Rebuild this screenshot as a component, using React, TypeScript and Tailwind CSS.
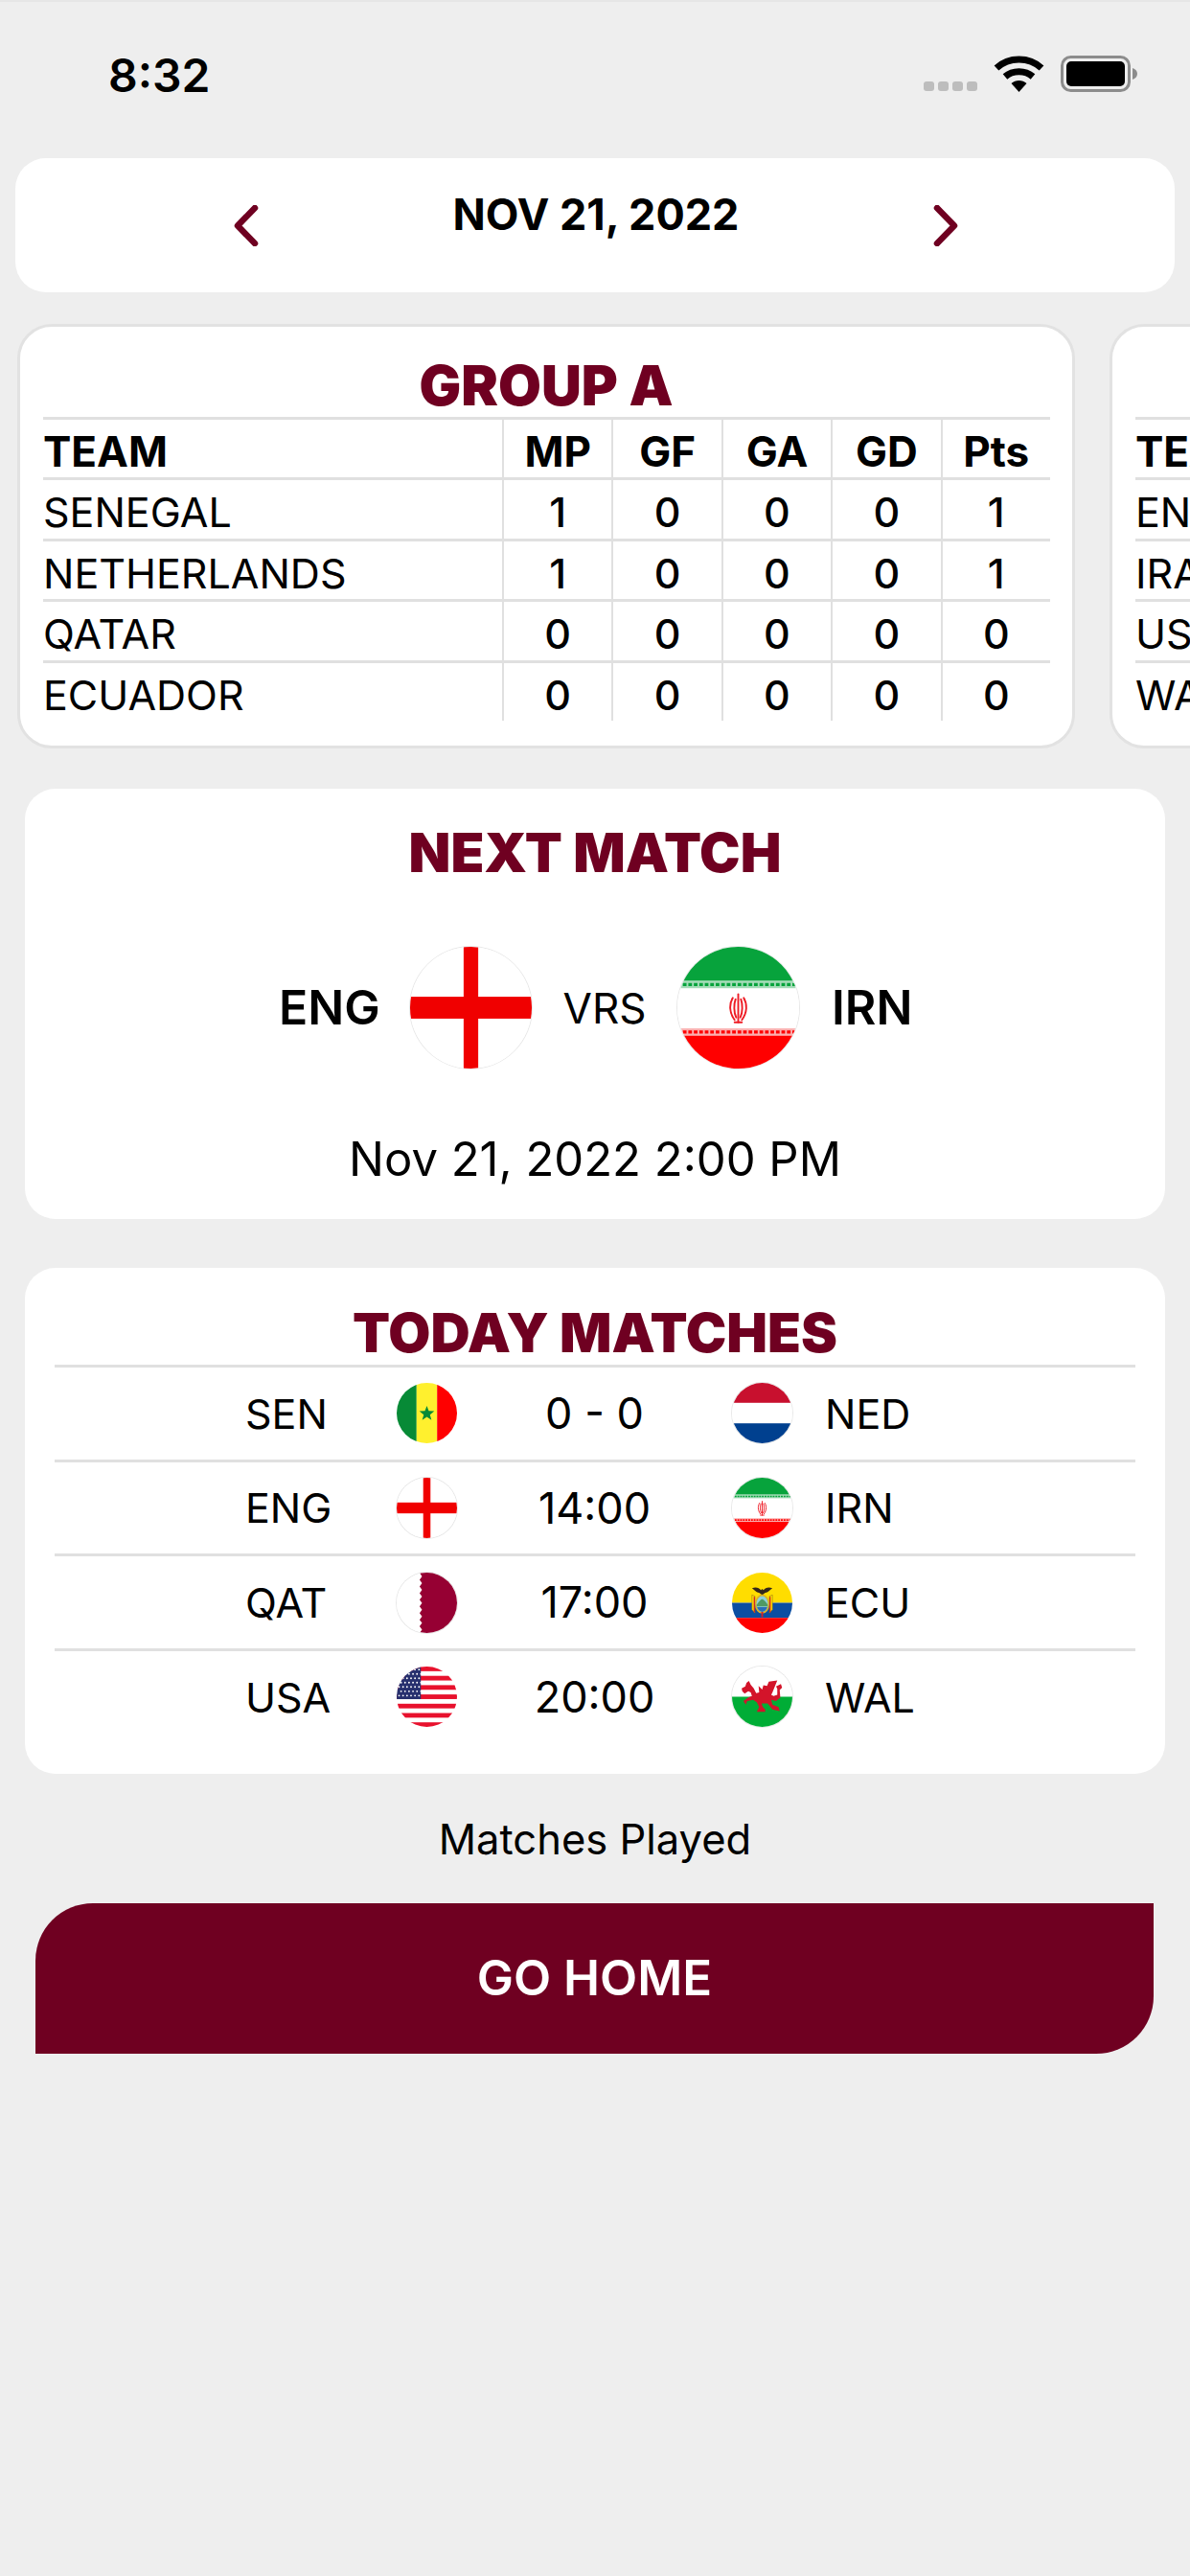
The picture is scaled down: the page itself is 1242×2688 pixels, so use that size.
const MAROON = '#6f0021';

// --- Flags, all drawn in a 100x100 box and cropped round ---
const FlagSvg = ({ size, children, ring }: { size: number; children: React.ReactNode; ring?: boolean }) => (
  <svg
    viewBox="0 0 100 100"
    width={size}
    height={size}
    className={`shrink-0 rounded-full ${ring ? 'ring-1 ring-[#e8e8e8]' : ''}`}
  >
    {children}
  </svg>
);

const England = ({ size }: { size: number }) => (
  <FlagSvg size={size} ring>
    <rect width="100" height="100" fill="#fff" />
    <rect x="44" width="12" height="100" fill="#f00000" />
    <rect y="41" width="100" height="18" fill="#f00000" />
  </FlagSvg>
);

const Iran = ({ size }: { size: number }) => (
  <FlagSvg size={size} ring>
    <rect width="100" height="100" fill="#fff" />
    <rect width="100" height="28" fill="#07a33c" />
    <rect y="28" width="100" height="6" fill="#a5dcb8" />
    <path d="M0 31h100" stroke="#07a33c" strokeWidth="2.500" strokeDasharray="3 1.500" />
    <rect y="67" width="100" height="6" fill="#fbb0b0" />
    <path d="M0 70h100" stroke="#ff0000" strokeWidth="2.500" strokeDasharray="3 1.500" />
    <rect y="73" width="100" height="27" fill="#ff0000" />
    <g fill="none" stroke="#ee1c25" strokeWidth="1.500" strokeLinecap="round">
      <path d="M50 39v23" />
      <path d="M47.800 43c-1.500 4-1.500 11 .5 15" />
      <path d="M52.200 43c1.500 4 1.500 11-.5 15" />
      <path d="M45.500 42c-3 5-3 12 1.500 18" />
      <path d="M54.500 42c3 5 3 12-1.500 18" />
      <path d="M47 62h6" />
    </g>
  </FlagSvg>
);

const Senegal = ({ size }: { size: number }) => (
  <FlagSvg size={size}>
    <rect width="33" height="100" fill="#078a36" />
    <rect x="33" width="34" height="100" fill="#fff02e" />
    <rect x="67" width="33" height="100" fill="#ff0000" />
    <path d="M50 38l3.200 8.600 9.200.4-7.200 5.700 2.500 8.800L50 56.500l-7.700 5 2.500-8.800-7.200-5.700 9.200-.4z" fill="#078a36" />
  </FlagSvg>
);

const Netherlands = ({ size }: { size: number }) => (
  <FlagSvg size={size} ring>
    <rect width="100" height="100" fill="#fff" />
    <rect width="100" height="33" fill="#c8102e" />
    <rect y="67" width="100" height="33" fill="#00408f" />
  </FlagSvg>
);

const Qatar = ({ size }: { size: number }) => (
  <FlagSvg size={size} ring>
    <rect width="100" height="100" fill="#fff" />
    <path
      d="M38 0h62v100H38l4-5.500-4-5.500 4-5.500-4-5.500 4-5.500-4-5.500 4-5.500-4-5.500 4-5.500-4-5.500 4-5.500-4-5.500 4-5.500-4-5.500 4-5.500-4-5.500 4-5.500z"
      fill="#960033"
    />
  </FlagSvg>
);

const Ecuador = ({ size }: { size: number }) => (
  <FlagSvg size={size}>
    <rect width="100" height="50" fill="#ffdd00" />
    <rect y="50" width="100" height="25" fill="#0b4ea2" />
    <rect y="75" width="100" height="25" fill="#ff0000" />
    {/* side flags of the crest */}
    <path d="M33 37l5 2v28l-5-6z" fill="#ffdd00" stroke="#8a6d1a" strokeWidth=".8" />
    <path d="M67 37l-5 2v28l5-6z" fill="#ffdd00" stroke="#8a6d1a" strokeWidth=".8" />
    <path d="M36 40h2v26h-2zM62 40h2v26h-2z" fill="#d0202a" />
    {/* eagle */}
    <path d="M33 26c6-3 12-1 15 3l2-2 2 2c3-4 9-6 15-3-3 1-5 4-8 6-3 1-5 1-6 3l-3 2-3-2c-1-2-3-2-6-3-3-2-5-5-8-6z" fill="#33261a" />
    {/* oval */}
    <ellipse cx="50" cy="52" rx="12" ry="16" fill="#d9b02a" />
    <ellipse cx="50" cy="52" rx="9.500" ry="13" fill="#8fd0d8" />
    <path d="M41 53c4-6 7-9 9-9s6 4 9 9v3H41z" fill="#4f9a63" />
    <path d="M41.500 57h17c-1 4-4 7-8.500 8-4.500-1-7.500-4-8.500-8z" fill="#2a6fb8" />
    <path d="M48.500 65h3v9h-3z" fill="#d0202a" />
  </FlagSvg>
);

const Usa = ({ size }: { size: number }) => {
  const stripes = [0, 2, 4, 6, 8, 10, 12];
  const stars: [number, number][] = [];
  for (let r = 0; r < 7; r++) {
    for (let c = 0; c < 6; c++) stars.push([4 + c * 6.6 + (r % 2) * 3.3, 5 + r * 7.2]);
  }
  return (
    <FlagSvg size={size}>
      <rect width="100" height="100" fill="#fff" />
      {stripes.map((s) => (
        <rect key={s} y={s * 7.7} width="100" height="7.7" fill="#e8112d" />
      ))}
      <rect width="40" height="54" fill="#27306e" />
      {stars.map(([x, y], i) => (
        <circle key={i} cx={x} cy={y} r="1.500" fill="#fff" />
      ))}
    </FlagSvg>
  );
};

const Wales = ({ size }: { size: number }) => (
  <FlagSvg size={size} ring>
    <rect width="100" height="100" fill="#fff" />
    <rect y="50" width="100" height="50" fill="#00ad36" />
    <path
      d="M16 36l6-3 2-6 4-3 3 6 5 6 4 8 5-1-1-11 6 6 2-7 6 1 3-7 14-2-4 10-4 10-2 4 4 2 6-2 0-10-2-4 8-4 2 6-4 4 1 12-7 6-8-2 2 8 10 4 2 7-12-3-8-10-10 0 2 6 4 4 0 4-14 0 4-8-4-8-6-4-10 2-2 6-4-6 8-6 6-2-2-6-4-2-6 4-4-4z"
      fill="#d3142a"
    />
  </FlagSvg>
);

// --- Status bar glyphs ---
const StatusIcons = () => (
  <div className="flex items-end gap-[17px]">
    <div className="flex gap-[4px] pb-[1px]">
      <span className="w-[11px] h-[10px] rounded-[3px] bg-[#bdbdbd]" />
      <span className="w-[11px] h-[10px] rounded-[3px] bg-[#bdbdbd]" />
      <span className="w-[11px] h-[10px] rounded-[3px] bg-[#bdbdbd]" />
      <span className="w-[11px] h-[10px] rounded-[3px] bg-[#bdbdbd]" />
    </div>
    <svg width="53" height="38" viewBox="0 0 53 38" fill="none" stroke="#000" strokeWidth="7">
      <path d="M3 13C16 1 37 1 50 13" />
      <path d="M12 22c8-7 21-7 29 0" />
      <path d="M26.500 38l-8-9c4.500-4 11.500-4 16 0z" fill="#000" stroke="none" />
    </svg>
    <svg width="80" height="38" viewBox="0 0 80 38">
      <rect x="1.500" y="1.500" width="70" height="35" rx="9" fill="none" stroke="#8c8c8c" strokeWidth="3" />
      <rect x="6" y="6" width="61" height="26" rx="5" fill="#000" />
      <path d="M75 13c3 1 5 3 5 6s-2 5-5 6z" fill="#8c8c8c" />
    </svg>
  </div>
);

const Chevron = ({ dir }: { dir: 'left' | 'right' }) => (
  <svg width="26" height="43" viewBox="0 0 26 43" fill="none" stroke={MAROON} strokeWidth="6.500" strokeLinecap="round" strokeLinejoin="round">
    <path d={dir === 'left' ? 'M22 3L4 21.500 22 40' : 'M4 3l18 18.500L4 40'} />
  </svg>
);

// --- Group table ---
const COLS = ['MP', 'GF', 'GA', 'GD', 'Pts'];

const GroupCard = ({ name, rows }: { name: string; rows: [string, number, number, number, number, number][] }) => (
  <div className="w-[1104px] h-[443px] shrink-0 rounded-[36px] border-[3px] border-[#e2e2e2] bg-white px-[24px] pt-[33px]">
    <div className="h-[56px] mb-[5px] text-center text-[58px] leading-[56px] font-black" style={{ color: MAROON }}>
      {name}
    </div>
    <div className="grid grid-cols-[479px_repeat(5,1fr)] w-[1051px] border-t-[3px] border-[#e0e0e0] text-[43px] leading-[66px] text-black">
      <div className="h-[60px] text-[44px] font-bold">TEAM</div>
      {COLS.map((c) => (
        <div key={c} className="h-[60px] border-l-2 border-[#e0e0e0] text-center text-[44px] font-bold">
          {c}
        </div>
      ))}
      {rows.map((r) => (
        <div key={r[0]} className="contents">
          <div className="h-[63.500px] border-t-[3px] border-[#e0e0e0]">{r[0]}</div>
          {r.slice(1).map((v, i) => (
            <div key={i} className="h-[63.500px] border-t-[3px] border-l-2 border-[#e0e0e0] text-center font-medium">
              {v}
            </div>
          ))}
        </div>
      ))}
    </div>
  </div>
);

const MATCHES = [
  { home: 'SEN', away: 'NED', score: '0 - 0', HomeFlag: Senegal, AwayFlag: Netherlands },
  { home: 'ENG', away: 'IRN', score: '14:00', HomeFlag: England, AwayFlag: Iran },
  { home: 'QAT', away: 'ECU', score: '17:00', HomeFlag: Qatar, AwayFlag: Ecuador },
  { home: 'USA', away: 'WAL', score: '20:00', HomeFlag: Usa, AwayFlag: Wales },
];

export default function App() {
  return (
    <div className="w-[1242px] h-[2688px] overflow-hidden bg-[#eeeeee] border-t-2 border-[#e6e6e6] font-['Inter',sans-serif] text-black">
      {/* status bar */}
      <div className="h-[163px] flex items-start justify-between pl-[113px] pr-[55px] pt-[52px]">
        <span className="text-[48px] leading-[50px] font-semibold">8:32</span>
        <div className="pt-[4px]">
          <StatusIcons />
        </div>
      </div>

      {/* date picker */}
      <div className="mx-[16px] h-[140px] rounded-[32px] bg-white flex items-start justify-between pl-[228px] pr-[226px]">
        <div className="pt-[49px]">
          <Chevron dir="left" />
        </div>
        <span className="pt-[31px] text-[45px] leading-[56px] font-bold">NOV 21, 2022</span>
        <div className="pt-[49px]">
          <Chevron dir="right" />
        </div>
      </div>

      {/* groups */}
      <div className="mt-[33px] pl-[18px] flex gap-[36px] overflow-hidden">
        <GroupCard
          name="GROUP A"
          rows={[
            ['SENEGAL', 1, 0, 0, 0, 1],
            ['NETHERLANDS', 1, 0, 0, 0, 1],
            ['QATAR', 0, 0, 0, 0, 0],
            ['ECUADOR', 0, 0, 0, 0, 0],
          ]}
        />
        <GroupCard
          name="GROUP B"
          rows={[
            ['ENGLAND', 0, 0, 0, 0, 0],
            ['IRAN', 0, 0, 0, 0, 0],
            ['USA', 0, 0, 0, 0, 0],
            ['WALES', 0, 0, 0, 0, 0],
          ]}
        />
      </div>

      {/* next match */}
      <div className="mt-[42px] mx-[26px] h-[449px] rounded-[32px] bg-white pt-[39px]">
        <div className="text-center text-[57px] leading-[56px] font-black" style={{ color: MAROON }}>
          NEXT MATCH
        </div>
        <div className="mt-[70px] pl-[265px] flex items-center">
          <span className="w-[137px] text-[50px] font-semibold">ENG</span>
          <England size={127} />
          <span className="w-[152px] text-center text-[44px]">VRS</span>
          <Iran size={127} />
          <span className="ml-[34px] text-[50px] font-semibold">IRN</span>
        </div>
        <div className="mt-[65px] text-center text-[49px] leading-[60px]">Nov 21, 2022 2:00 PM</div>
      </div>

      {/* today */}
      <div className="mt-[51px] mx-[26px] h-[528px] rounded-[32px] bg-white">
        <div className="h-[101px] pt-[40px] text-center text-[57px] leading-[56px] font-black" style={{ color: MAROON }}>
          TODAY MATCHES
        </div>
        <div className="mx-[31px]">
          {MATCHES.map(({ home, away, score, HomeFlag, AwayFlag }, i) => (
            <div key={i} className="h-[98.700px] border-t-[3px] border-[#e0e0e0] pl-[199px] flex items-center text-[43px]">
              <span className="w-[158px]">{home}</span>
              <HomeFlag size={63} />
              <span className="w-[287px] text-center text-[45px]">{score}</span>
              <AwayFlag size={63} />
              <span className="ml-[34px]">{away}</span>
            </div>
          ))}
        </div>
      </div>

      <div className="mt-[38px] text-center text-[43.500px] leading-[60px]">Matches Played</div>

      <div className="mt-[37px] ml-[37px] w-[1167px] h-[157px] rounded-tl-[60px] rounded-br-[60px] flex items-center justify-center text-[51px] font-semibold text-white" style={{ backgroundColor: MAROON }}>
        GO HOME
      </div>
    </div>
  );
}
